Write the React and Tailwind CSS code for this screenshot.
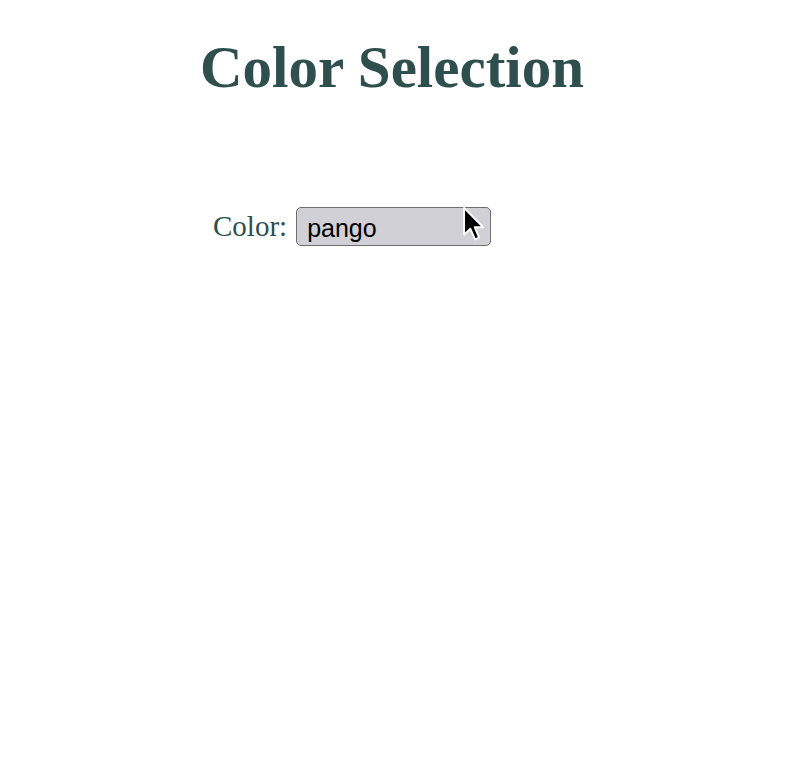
export default function App() {
  return (
    <div className="min-h-[765px] w-[800px] bg-white text-[#2f4f4f]">
      {/* heading */}
      <div className="w-[784px] pt-[35px]">
        <h1 className="text-center font-['Liberation_Serif',serif] text-[59px] font-bold leading-[65px]">
          Color Selection
        </h1>
      </div>

      {/* color picker row */}
      <div className="mt-[105px] flex items-center pl-[213px]">
        <label
          htmlFor="color"
          className="mr-[9px] font-['Liberation_Serif',serif] text-[29px] leading-normal"
        >
          Color:
        </label>
        <div className="relative">
          <select
            id="color"
            defaultValue="pango"
            className="h-[39px] w-[195px] appearance-none rounded-[5px] border border-[#6e6d73] bg-[#d1d0d6] pl-[10px] pt-[2px] font-['Liberation_Sans',Arial,sans-serif] text-[25px] text-black outline-none"
          >
            <option value="pango">pango</option>
          </select>
          {/* mouse pointer */}
          <svg
            className="pointer-events-none absolute left-[166px] top-[-1px]"
            width="24"
            height="38"
            viewBox="0 0 14 22"
          >
            <path
              d="M1.2 1 L1.2 16.6 L4.9 13.2 L7.6 19.4 L10 18.3 L7.4 12.3 L12.4 12.3 Z"
              fill="#000"
              stroke="#fff"
              strokeWidth="1.1"
              strokeLinejoin="round"
            />
          </svg>
        </div>
      </div>
    </div>
  );
}
